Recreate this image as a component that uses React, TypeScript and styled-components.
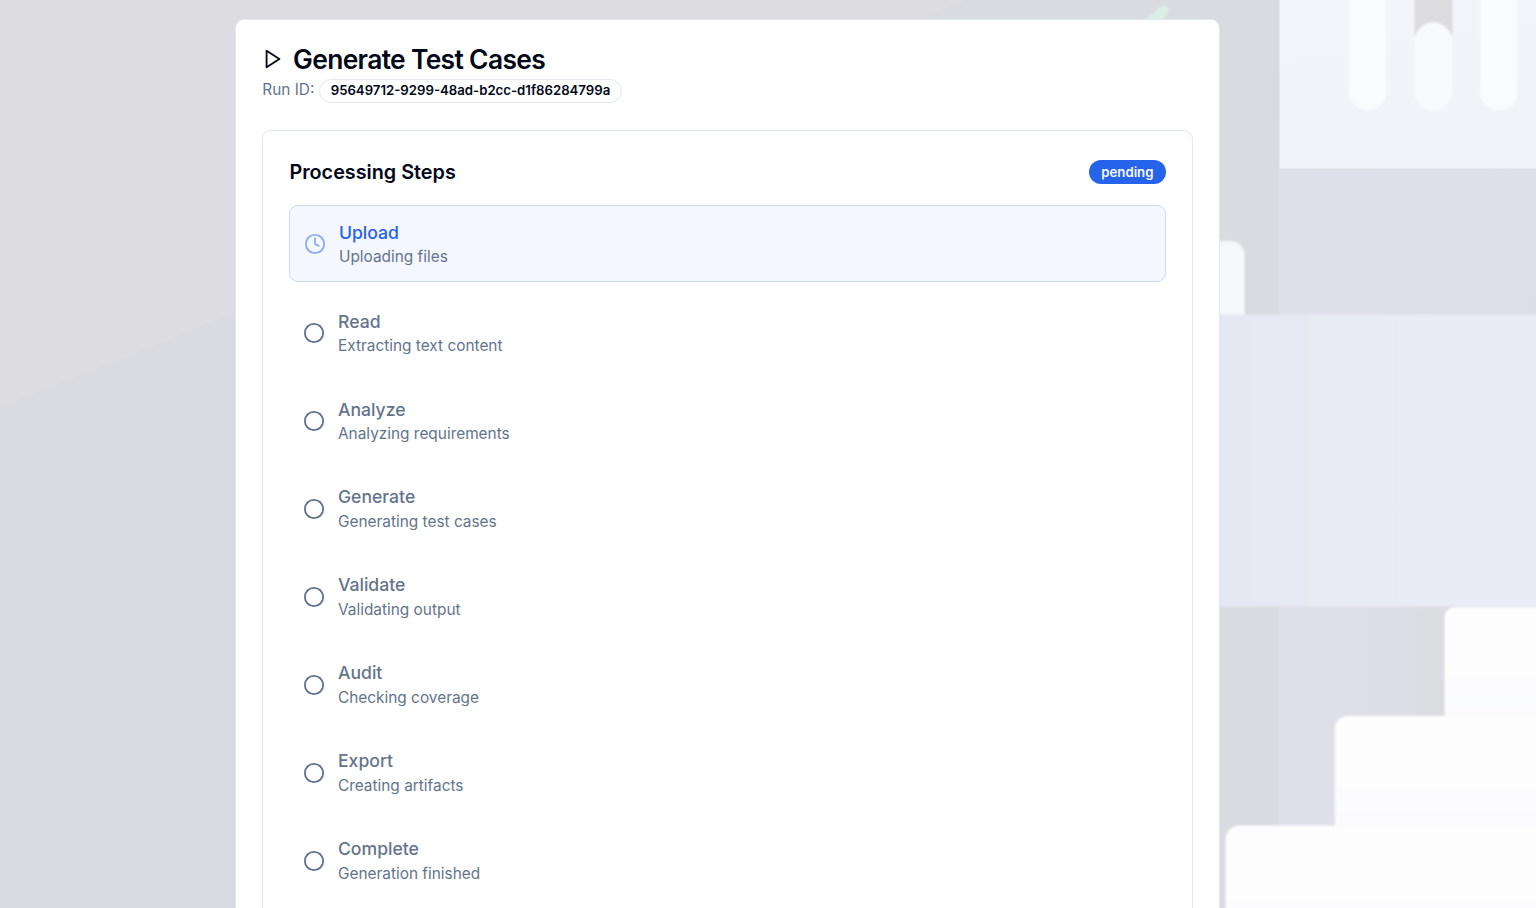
import React from 'react';
import styled, { createGlobalStyle } from 'styled-components';
import { Circle, Clock } from 'lucide-react';

const GlobalStyle = createGlobalStyle`
  *, *::before, *::after { box-sizing: border-box; }
  html, body { margin: 0; height: 100%; overflow: hidden; }
  body {
    font-family: Inter, 'Liberation Sans', sans-serif;
    color: #020817;
    background: #dbdce0;
  }
  h1, h2, h3, p, ul { margin: 0; padding: 0; font-weight: inherit; }
`;

const Page = styled.div`
  position: relative;
  height: 100vh;
  overflow: hidden;
  padding: 19px 81px 0 0;
`;

const Backdrop = styled.svg`
  position: absolute;
  inset: 0;
  display: block;
`;

const Dialog = styled.main`
  position: relative;
  width: 985.2px;
  margin: 0 auto;
  padding: 26.4px;
  min-height: 1100px;
  background: #fff;
  border: 1px solid #e2e8f0;
  border-radius: 8.8px;
  box-shadow: 0 1px 2px rgba(0, 0, 0, 0.05);
`;

const Header = styled.header`
  display: flex;
  flex-direction: column;
  margin-bottom: 26.65px;
`;

const Title = styled.h1`
  display: flex;
  align-items: center;
  gap: 8.8px;
  height: 26.4px;
  font-size: 26.4px;
  line-height: 26.4px;
  font-weight: 600;
  letter-spacing: -0.66px;

  svg {
    flex: none;
    margin-bottom: 1.6px;
  }
`;

const RunRow = styled.div`
  display: flex;
  align-items: center;
  gap: 4.5px;
  margin-top: 6px;
  font-size: 15.4px;
  line-height: 22px;
  color: #64748b;
`;

const RunLabel = styled.span`
  margin-bottom: 1.6px;
`;

const Badge = styled.span<{ $filled?: boolean }>`
  display: inline-flex;
  align-items: center;
  height: 24.2px;
  padding: 0 ${p => (p.$filled ? '11.2px' : '10.8px')};
  border: 1px solid ${p => (p.$filled ? 'transparent' : '#e2e8f0')};
  border-radius: 999px;
  font-size: 13.2px;
  line-height: 17.6px;
  font-weight: 600;
  color: ${p => (p.$filled ? '#f8fafc' : '#020817')};
  background: ${p => (p.$filled ? '#2563eb' : 'transparent')};
  background-clip: border-box;
`;

const Panel = styled.section`
  min-height: 900px;
  padding: 26.4px 26.1px;
  border: 1px solid #e2e8f0;
  border-radius: 8.8px;
`;

const PanelHeader = styled.div`
  display: flex;
  align-items: center;
  justify-content: space-between;
  height: 30.8px;
  margin-bottom: 17.6px;
`;

const PanelTitle = styled.h2`
  font-size: 19.8px;
  line-height: 30.8px;
  font-weight: 600;
`;

const Steps = styled.ul`
  display: flex;
  flex-direction: column;
  gap: 13.2px;
  list-style: none;
`;

const Step = styled.li<{ $active?: boolean }>`
  display: flex;
  align-items: center;
  gap: 13.2px;
  padding: 13.2px 13.4px;
  border: ${p => (p.$active ? '1px solid #cbd9f9' : '0')};
  border-radius: 8.8px;
  background: ${p => (p.$active ? '#f4f7fe' : 'transparent')};
  color: ${p => (p.$active ? '#2563eb' : '#64748b')};

  svg {
    flex: none;
    margin-bottom: 0.13px;
    opacity: ${p => (p.$active ? 0.5 : 1)};
  }
`;

const StepName = styled.h3`
  font-size: 17.6px;
  line-height: 26.4px;
  font-weight: 500;
`;

const StepNote = styled.p`
  font-size: 15.4px;
  line-height: 22px;
  color: #64748b;
`;

const steps = [
  ['Upload', 'Uploading files'],
  ['Read', 'Extracting text content'],
  ['Analyze', 'Analyzing requirements'],
  ['Generate', 'Generating test cases'],
  ['Validate', 'Validating output'],
  ['Audit', 'Checking coverage'],
  ['Export', 'Creating artifacts'],
  ['Complete', 'Generation finished'],
];

function Scenery() {
  return (
    <Backdrop width="1536" height="908" viewBox="0 0 1536 908" aria-hidden="true">
      <defs>
        <linearGradient id="lilac" x1="1280" y1="0" x2="1445" y2="0" gradientUnits="userSpaceOnUse">
          <stop offset="0" stopColor="#dfdfec" />
          <stop offset="0.35" stopColor="#dfdfea" />
          <stop offset="0.8" stopColor="#dddde5" />
          <stop offset="0.88" stopColor="#dbdce0" />
          <stop offset="1" stopColor="#dbdce0" />
        </linearGradient>
        <linearGradient id="wall" x1="1280" y1="170" x2="1560" y2="330" gradientUnits="userSpaceOnUse">
          <stop offset="0" stopColor="#dfdfec" />
          <stop offset="0.5" stopColor="#dfdfea" />
          <stop offset="1" stopColor="#dedee6" />
        </linearGradient>
        <linearGradient id="band" x1="1220" y1="0" x2="1536" y2="0" gradientUnits="userSpaceOnUse">
          <stop offset="0" stopColor="#e5e7f3" />
          <stop offset="0.27" stopColor="#e6e8f3" />
          <stop offset="0.3" stopColor="#e8ebf4" />
          <stop offset="1" stopColor="#e9ecf5" />
        </linearGradient>
        <linearGradient id="sheet" x1="0" y1="0" x2="0.25" y2="1">
          <stop offset="0" stopColor="#f4f5fb" />
          <stop offset="1" stopColor="#f1f3f8" />
        </linearGradient>
        <linearGradient id="stair" x1="0" y1="0" x2="0" y2="1">
          <stop offset="0" stopColor="#fdfdfd" />
          <stop offset="0.55" stopColor="#fdfdfe" />
          <stop offset="1" stopColor="#fafbfe" />
        </linearGradient>
        <filter id="soft" x="-10%" y="-10%" width="120%" height="120%">
          <feGaussianBlur stdDeviation="0.8" />
        </filter>
      </defs>
      <rect width="1536" height="908" fill="#dadbe0" />
      <path d="M0 0H965L236 312L0 407Z" fill="#dddce1" />
      <rect x="1279.5" y="160" width="260" height="160" fill="url(#wall)" />
      <rect x="1279.5" y="600" width="166" height="240" fill="url(#lilac)" />
      <g filter="url(#soft)">
        <path d="M1140 24L1159 8Q1166 4 1168 8Q1169 13 1160 24Z" fill="#dcefe5" />
        <rect x="1200" y="241" width="44.5" height="100" rx="14" fill="#f6f8fc" />
        <rect x="1200" y="314.5" width="350" height="292" fill="url(#band)" />
        <rect x="1444.5" y="607" width="120" height="120" rx="10" fill="url(#stair)" />
        <rect x="1335" y="716" width="220" height="120" rx="12" fill="url(#stair)" />
        <rect x="1225.5" y="825.5" width="330" height="124" rx="14" fill="url(#stair)" />
      </g>
      <rect x="1279.5" y="-10" width="270" height="178.5" fill="url(#sheet)" />
      <g filter="url(#soft)">
        <rect x="1414.5" y="-10" width="38" height="46" fill="#dcdbe0" />
        <rect x="1414.5" y="22.5" width="37.5" height="88" rx="18.5" fill="#f9fafe" />
        <rect x="1349" y="-30" width="37" height="140.5" rx="18.5" fill="#f9fbfe" />
        <rect x="1480.5" y="-30" width="37" height="140.5" rx="18.5" fill="#f9fbfe" />
      </g>
    </Backdrop>
  );
}

export default function App() {
  return (
    <Page>
      <GlobalStyle />
      <Scenery />
      <Dialog>
        <Header>
          <Title>
            <svg width="22" height="22" viewBox="0 0 24 24" fill="none" stroke="currentColor" strokeWidth="2" strokeLinecap="round" strokeLinejoin="round">
              <polygon points="5 3 19 12 5 21 5 3" />
            </svg>
            Generate Test Cases
          </Title>
          <RunRow>
            <RunLabel>Run ID:</RunLabel>
            <Badge>95649712-9299-48ad-b2cc-d1f86284799a</Badge>
          </RunRow>
        </Header>
        <Panel>
          <PanelHeader>
            <PanelTitle>Processing Steps</PanelTitle>
            <Badge $filled>pending</Badge>
          </PanelHeader>
          <Steps>
            {steps.map(([name, note], i) => (
              <Step key={name} $active={i === 0}>
                {i === 0 ? <Clock size={22} /> : <Circle size={22} />}
                <div>
                  <StepName>{name}</StepName>
                  <StepNote>{note}</StepNote>
                </div>
              </Step>
            ))}
          </Steps>
        </Panel>
      </Dialog>
    </Page>
  );
}
